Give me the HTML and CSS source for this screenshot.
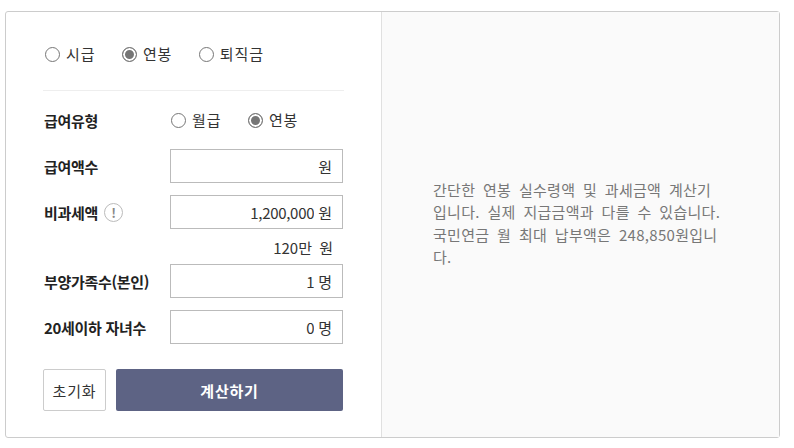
FILE: index.html
```html
<!DOCTYPE html>
<html lang="ko">

<head>
    <meta charset="UTF-8">
    <meta name="viewport" content="width=device-width, initial-scale=1.0">
    <title>연봉 계산기</title>
    <link rel="stylesheet" href="styles.css">
</head>

<body>
    <div class="calc">
        <form class="calc-form">
            <div class="radio-group top-group">
                <label class="radio"><input type="radio" name="kind"><span>시급</span></label>
                <label class="radio"><input type="radio" name="kind" checked><span>연봉</span></label>
                <label class="radio"><input type="radio" name="kind"><span>퇴직금</span></label>
            </div>

            <div class="row row-type">
                <div class="label">급여유형</div>
                <div class="radio-group">
                    <label class="radio"><input type="radio" name="pay"><span>월급</span></label>
                    <label class="radio"><input type="radio" name="pay" checked><span>연봉</span></label>
                </div>
            </div>

            <div class="row">
                <div class="label">급여액수</div>
                <div class="field"><input type="text" value=""><span>원</span></div>
            </div>

            <div class="row">
                <div class="label">비과세액 <span class="info">!</span></div>
                <div class="field"><input type="text" value="1,200,000"><span>원</span></div>
            </div>
            <div class="hint">120만 원</div>

            <div class="row">
                <div class="label">부양가족수(본인)</div>
                <div class="field"><input type="text" value="1"><span>명</span></div>
            </div>

            <div class="row">
                <div class="label">20세이하 자녀수</div>
                <div class="field"><input type="text" value="0"><span>명</span></div>
            </div>

            <div class="buttons">
                <button type="button" class="btn-reset">초기화</button>
                <button type="button" class="btn-submit">계산하기</button>
            </div>
        </form>

        <div class="calc-info">
            <p>간단한 연봉 실수령액 및 과세금액 계산기입니다. 실제 지급금액과 다를 수 있습니다. 국민연금 월 최대 납부액은 248,850원입니다.</p>
        </div>
    </div>
</body>

</html>
```

FILE: styles.css
```css
* {
    box-sizing: border-box;
}

body {
    margin: 0;
    padding: 11px 14px 0 5px;
    background-color: white;
    color: #333;
    font-family: "Noto Sans CJK KR", "Noto Sans", sans-serif;
    font-size: 15px;
}

.calc {
    display: flex;
    height: 427px;
    border: 1px solid #ccc;
    border-radius: 3px;
}

.calc-form {
    width: 376px;
    padding: 0 37px;
    border-right: 1px solid #e0e0e0;
}

.radio-group {
    display: flex;
    gap: 24.5px;
}

.top-group {
    height: 79px;
    padding-top: 29px;
    margin-bottom: 11px;
    border-bottom: 1px solid #eee;
}

.radio {
    display: flex;
    align-items: center;
    gap: 6px;
    height: 26px;
    padding-left: 2px;
    line-height: 26px;
    letter-spacing: 0.9px;
}

.radio input {
    appearance: none;
    width: 15px;
    height: 15px;
    margin: 0;
    border: 1px solid #767676;
    border-radius: 50%;
    background-color: white;
}

.radio input:checked {
    background-color: #767676;
    box-shadow: inset 0 0 0 2px white;
}

.row {
    display: flex;
    align-items: center;
    height: 34px;
    margin-bottom: 12px;
}

.row-type {
    height: 36px;
    margin-bottom: 11px;
}

.row-type .label {
    width: 126px;
}

.label {
    display: flex;
    align-items: center;
    width: 127px;
    padding-left: 1px;
    color: #222;
    font-weight: bold;
    letter-spacing: -0.3px;
    white-space: nowrap;
}

.info {
    width: 19px;
    height: 19px;
    margin-left: 6px;
    border: 1px solid #bbb;
    border-radius: 50%;
    color: #888;
    font-size: 13px;
    line-height: 17px;
    text-align: center;
}

.field {
    display: flex;
    align-items: center;
    gap: 4px;
    width: 173px;
    height: 34px;
    padding: 0 10px 0 8px;
    border: 1px solid #bbb;
}

.field input {
    flex: 1;
    min-width: 0;
    padding: 0;
    border: 0;
    outline: 0;
    color: #333;
    font-family: inherit;
    font-size: 15px;
    letter-spacing: -0.3px;
    text-align: right;
}

.hint {
    height: 23px;
    margin-top: -5px;
    margin-bottom: 5px;
    padding-right: 11px;
    line-height: 23px;
    text-align: right;
    word-spacing: 3px;
}

.buttons {
    display: flex;
    gap: 10px;
    margin-top: 25px;
}

.buttons button {
    height: 42px;
    border-radius: 2px;
    font-family: inherit;
    font-size: 15px;
    letter-spacing: 0.8px;
}

.btn-reset {
    width: 63px;
    padding: 0;
    border: 1px solid #ccc;
    background-color: white;
    color: #333;
}

.btn-submit {
    width: 227px;
    border: 0;
    background-color: #5d6384;
    color: white;
    font-weight: bold;
}

.calc-info {
    flex: 1;
    display: flex;
    align-items: center;
    padding: 0 57px 0 51px;
    background-color: #fafafa;
}

.calc-info p {
    margin: 0 0 2px;
    color: #777;
    line-height: 22.4px;
    letter-spacing: 0.3px;
    word-spacing: 3.2px;
    word-break: break-all;
}
```
